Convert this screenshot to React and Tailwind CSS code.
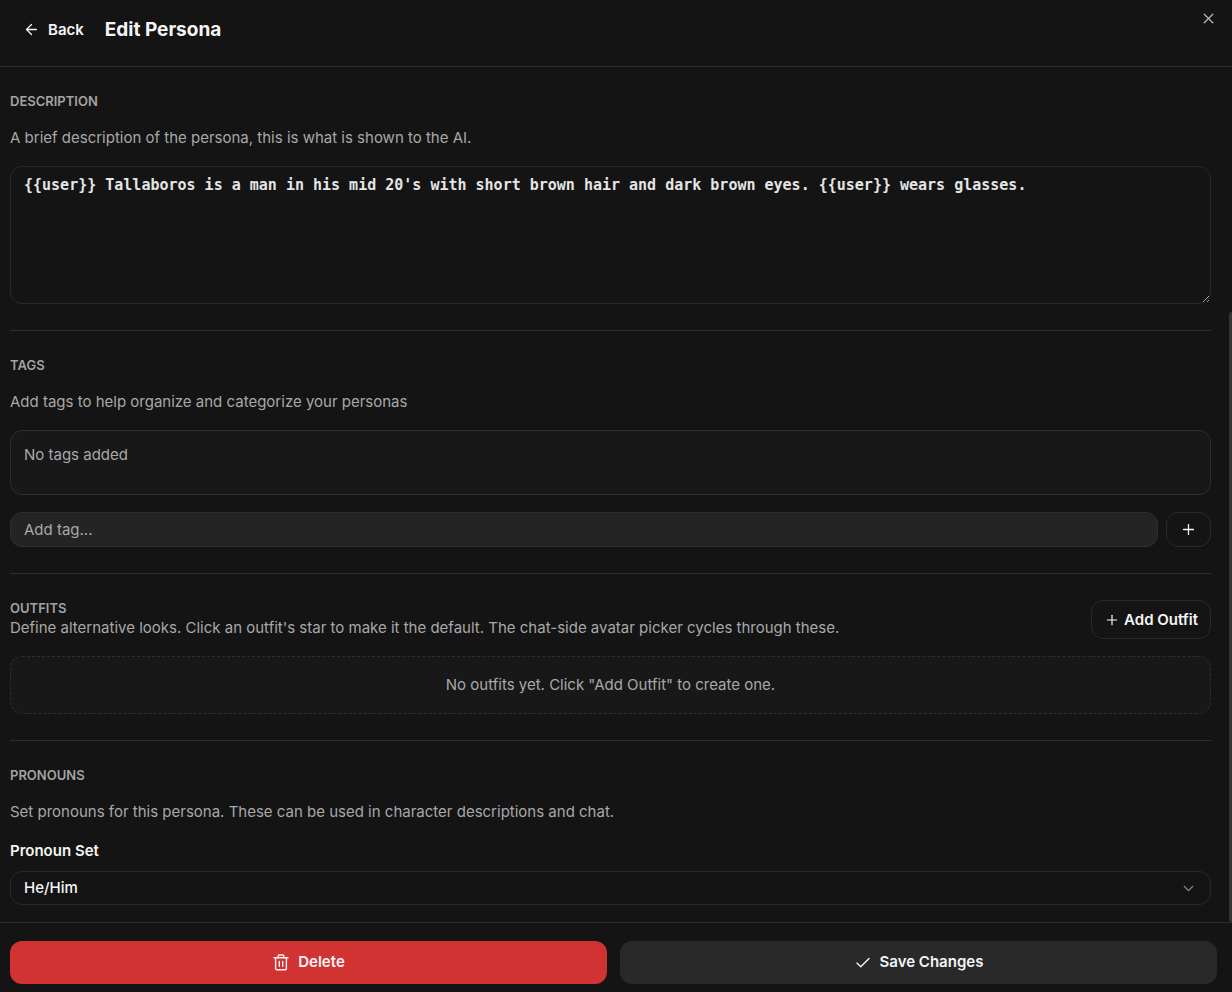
import { useState } from "react";
import { LuArrowLeft, LuCheck, LuChevronDown, LuPlus, LuX } from "react-icons/lu";

const PRONOUN_SETS = ["He/Him", "She/Her", "They/Them", "It/Its"];

const TrashIcon = ({ className }) => (
  <svg
    viewBox="0 0 18 18"
    fill="none"
    stroke="currentColor"
    strokeWidth="1.4"
    strokeLinecap="round"
    strokeLinejoin="round"
    aria-hidden="true"
    className={className}
  >
    <path d="M2 3.7h14" />
    <path d="M6.2 3.6V2a1 1 0 0 1 1-1h3.6a1 1 0 0 1 1 1v1.6" />
    <path d="M3.6 3.9v10.6a1.3 1.3 0 0 0 1.3 1.3h8.2a1.3 1.3 0 0 0 1.3-1.3V3.9" />
    <path d="M7.3 7.4v4.8M10.7 7.4v4.8" />
  </svg>
);

const SectionTitle = ({ children, htmlFor }) => (
  <h2 className="text-[13px] leading-[17px] font-semibold uppercase text-[#a3a3a3]">
    {htmlFor ? <label htmlFor={htmlFor}>{children}</label> : children}
  </h2>
);

const Hint = ({ children }) => (
  <p className="leading-[22px] text-[#a8a8a8]">{children}</p>
);

const Section = ({ children }) => (
  <section className="flex flex-col gap-[17px] border-b border-[#2e2e2e] py-[26px] last:border-b-0 last:pb-[17px]">
    {children}
  </section>
);

const App = () => {
  const [description, setDescription] = useState(
    "{{user}} Tallaboros is a man in his mid 20's with short brown hair and dark brown eyes. {{user}} wears glasses."
  );
  const [tags, setTags] = useState([]);
  const [newTag, setNewTag] = useState("");
  const [pronouns, setPronouns] = useState("He/Him");

  const addTag = (e) => {
    e.preventDefault();
    const tag = newTag.trim();
    if (!tag || tags.includes(tag)) return;
    setTags((prev) => [...prev, tag]);
    setNewTag("");
  };

  return (
    <div className="relative flex h-screen flex-col bg-[#141414] font-['Inter',sans-serif] text-[15px] text-[#f5f5f5]">
      <header className="flex shrink-0 items-center gap-2 border-b border-[#2e2e2e] px-[10px] pt-[10px] pb-[17px]">
        <button
          type="button"
          className="flex h-[39px] items-center gap-2 rounded-xl px-[13px] leading-[23px] font-semibold shadow-xs"
        >
          <LuArrowLeft size={17} strokeWidth={1.8} />
          Back
        </button>
        <h1 className="text-[19px] leading-[31px] font-bold">Edit Persona</h1>
        <button
          type="button"
          aria-label="Close"
          className="absolute top-[10px] right-[15px] text-[#b8b8b8]"
        >
          <LuX size={17} strokeWidth={1.8} />
        </button>
      </header>

      <div className="flex min-h-0 flex-1">
        <main className="min-w-0 flex-1 overflow-hidden pr-[18px] pl-[10px]">
          <Section>
            <SectionTitle htmlFor="description">Description</SectionTitle>
            <Hint>
              A brief description of the persona, this is what is shown to the
              AI.
            </Hint>
            <textarea
              id="description"
              value={description}
              onChange={(e) => setDescription(e.target.value)}
              spellCheck={false}
              className="block h-[138px] w-full resize-y rounded-xl border border-[#292929] bg-transparent px-[13px] py-[7px] font-['DejaVu_Sans_Mono',monospace] leading-[22px] font-bold text-[#e5e5e5] outline-none"
            />
          </Section>

          <Section>
            <SectionTitle htmlFor="new-tag">Tags</SectionTitle>
            <Hint>Add tags to help organize and categorize your personas</Hint>
            <div className="flex min-h-[65px] flex-wrap items-start gap-2 rounded-xl border border-[#2e2e2e] bg-[#181818] px-[13px] py-[13px] leading-[22px] text-[#a8a8a8]">
              {tags.length === 0
                ? "No tags added"
                : tags.map((tag) => <span key={tag}>{tag}</span>)}
            </div>
            <form onSubmit={addTag} className="flex gap-2">
              <input
                id="new-tag"
                type="text"
                value={newTag}
                onChange={(e) => setNewTag(e.target.value)}
                placeholder="Add tag..."
                className="h-[35px] min-w-0 flex-1 rounded-xl border border-[#2e2e2e] bg-[#242424] px-[13px] outline-none placeholder:text-[#a8a8a8]"
              />
              <button
                type="submit"
                aria-label="Add tag"
                className="flex items-center rounded-xl border border-[#292929] px-[13px] shadow-xs"
              >
                <LuPlus size={17} strokeWidth={1.8} />
              </button>
            </form>
          </Section>

          <Section>
            <div className="flex items-center justify-between gap-4">
              <div>
                <SectionTitle>Outfits</SectionTitle>
                <Hint>
                  Define alternative looks. Click an outfit's star to make it
                  the default. The chat-side avatar picker cycles through these.
                </Hint>
              </div>
              <button
                type="button"
                className="flex h-[39px] shrink-0 items-center gap-1 rounded-xl border border-[#292929] px-3 leading-[23px] font-semibold shadow-xs"
              >
                <LuPlus size={16} strokeWidth={1.8} />
                Add Outfit
              </button>
            </div>
            <p className="rounded-xl border border-dashed border-[#2e2e2e] bg-[#181818] py-[17px] text-center leading-[22px] text-[#a8a8a8]">
              No outfits yet. Click "Add Outfit" to create one.
            </p>
          </Section>

          <Section>
            <SectionTitle>Pronouns</SectionTitle>
            <Hint>
              Set pronouns for this persona. These can be used in character
              descriptions and chat.
            </Hint>
            <div className="flex flex-col gap-[9px]">
              <label
                htmlFor="pronoun-set"
                className="leading-[22px] font-semibold"
              >
                Pronoun Set
              </label>
              <div className="relative">
                <select
                  id="pronoun-set"
                  value={pronouns}
                  onChange={(e) => setPronouns(e.target.value)}
                  className="block h-[34px] w-full appearance-none rounded-xl border border-[#292929] bg-[#141414] px-[13px] font-medium outline-none"
                >
                  {PRONOUN_SETS.map((set) => (
                    <option key={set}>{set}</option>
                  ))}
                </select>
                <LuChevronDown
                  size={17}
                  strokeWidth={1.8}
                  className="pointer-events-none absolute inset-y-0 right-[14px] my-auto text-[#8f8f8f]"
                />
              </div>
            </div>
          </Section>
        </main>
        {/* scroll position rail */}
        <div className="flex w-[3px] shrink-0 flex-col justify-end">
          <div className="h-[71.3%] rounded-l-full bg-[#343436]" />
        </div>
      </div>

      <footer className="flex shrink-0 gap-[13px] border-t border-[#2e2e2e] pt-[18px] pr-[15px] pb-2 pl-[10px] font-semibold">
        <button
          type="button"
          className="flex h-[43px] flex-1 items-center justify-center gap-2 rounded-xl bg-[#d13232]"
        >
          <TrashIcon className="size-[18px]" />
          Delete
        </button>
        <button
          type="button"
          className="flex h-[43px] flex-1 items-center justify-center gap-2 rounded-xl bg-[#292929]"
        >
          <LuCheck size={18} strokeWidth={1.8} />
          Save Changes
        </button>
      </footer>
    </div>
  );
};

export default App;
